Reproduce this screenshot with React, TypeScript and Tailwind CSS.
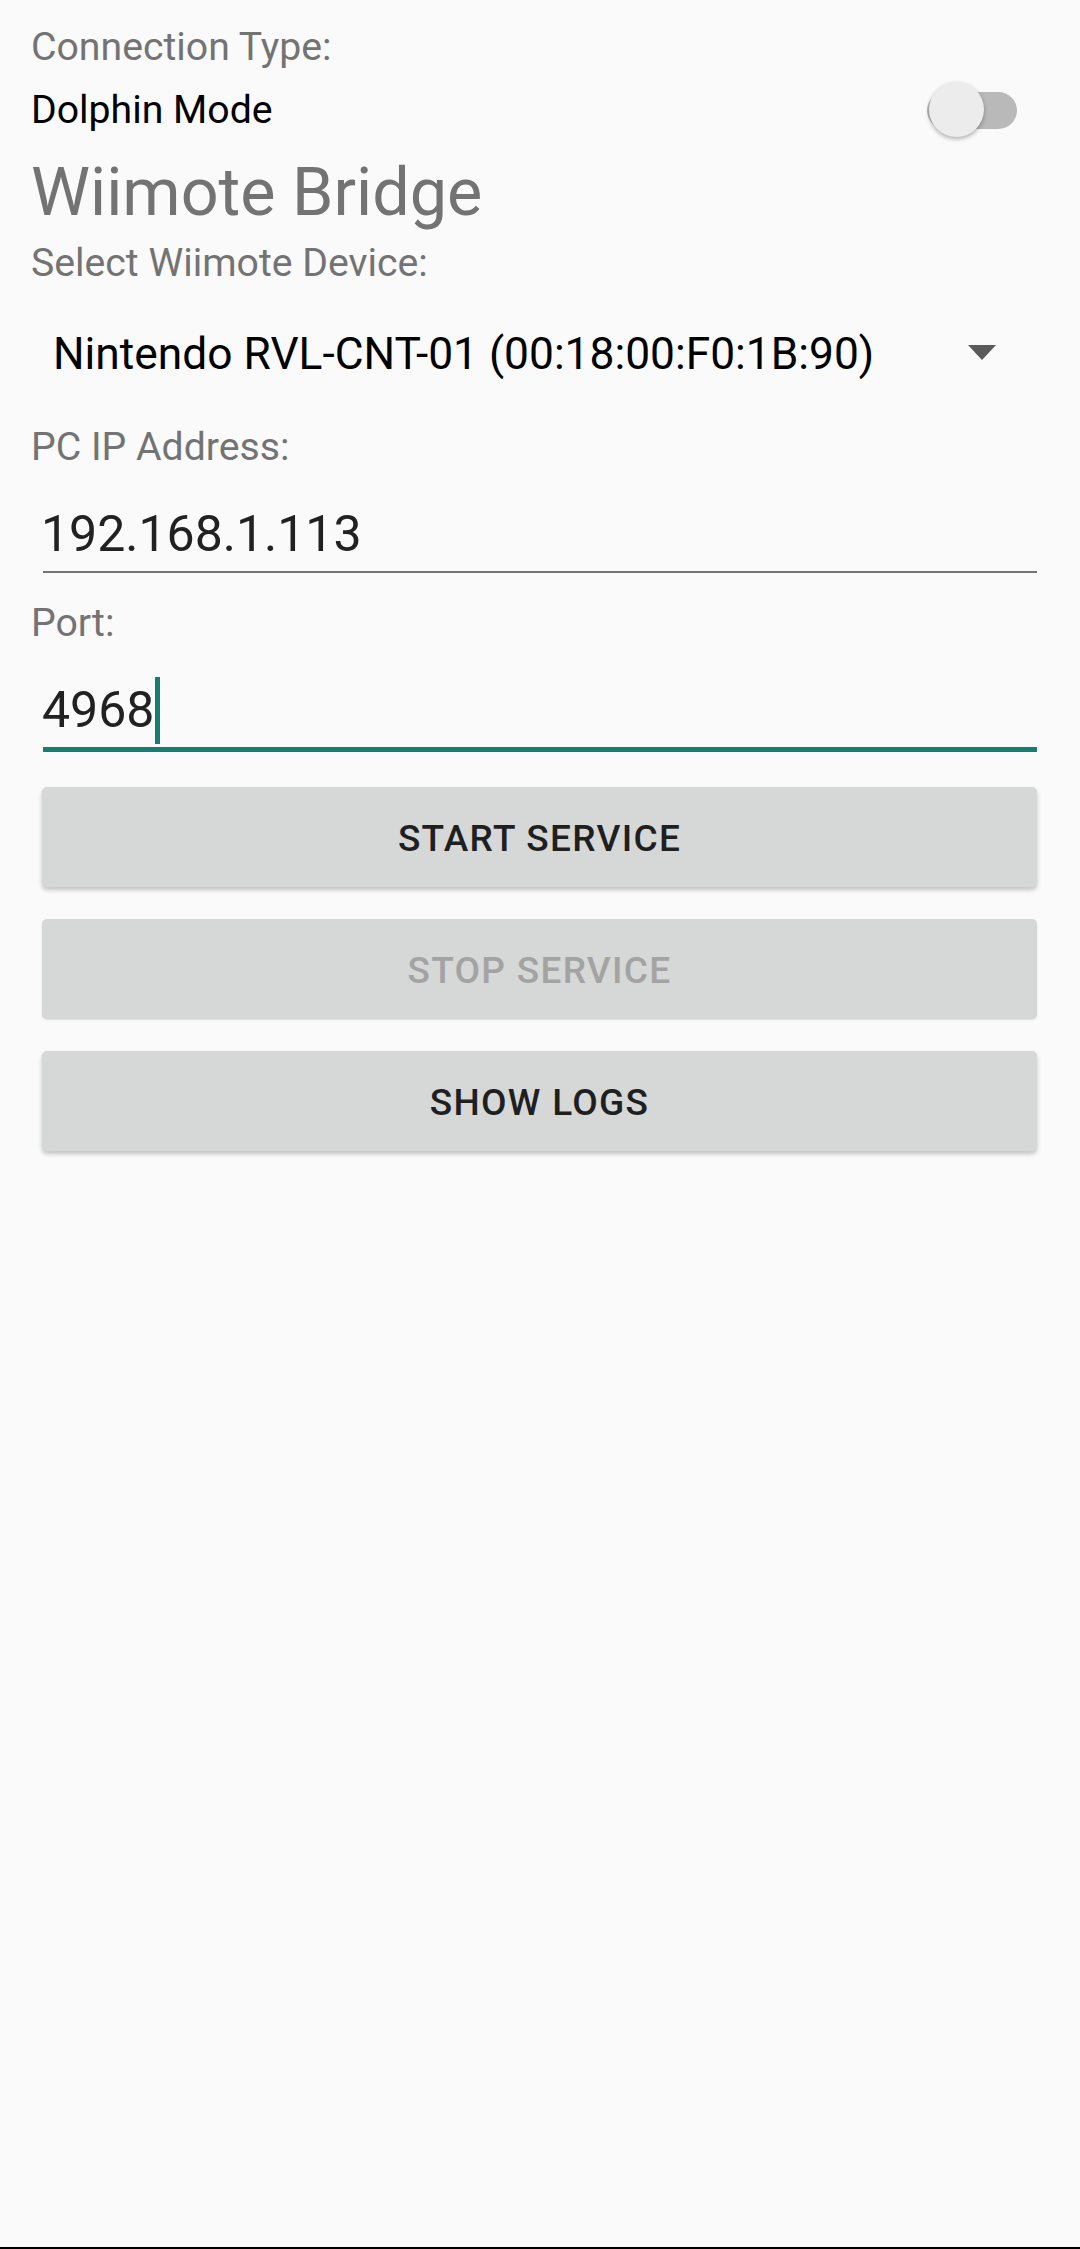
import React from 'react';

const font = { fontFamily: 'Roboto, "Noto Sans", sans-serif' };

const Label = ({ text, className = '' }: { text: string; className?: string }) => (
  <div className={`text-[39.2px] leading-[46px] text-[#737373] ${className}`}>{text}</div>
);

const Switch = () => (
  <div className="relative w-[90px] h-[56px] shrink-0">
    <div className="absolute left-0 right-0 top-[10px] h-[37px] rounded-full bg-[#b9b9b9]" />
    <div className="absolute left-[2px] top-0 w-[55px] h-[55px] rounded-full bg-[#ececec] shadow-[0_2px_4px_rgba(0,0,0,0.3)]" />
  </div>
);

const AppButton = ({ label, disabled = false }: { label: string; disabled?: boolean }) => (
  <button
    className={`h-[100px] w-full rounded-[5px] bg-[#d6d7d7] flex items-center justify-center pt-[3px] text-[37px] font-medium tracking-[0.035em] ${
      disabled ? 'text-[#a3a3a3] shadow-[0_1px_2px_rgba(0,0,0,0.12)]' : 'text-[#1f1f1f] shadow-[0_3px_4px_rgba(0,0,0,0.22)]'
    }`}
  >
    {label}
  </button>
);

export default function App() {
  return (
    <div className="h-[2249px] w-[1080px] bg-[#fafafa] flex flex-col" style={font}>
      <div className="flex flex-col pt-[24px] pl-[31px] pr-[43px]">
        <Label text="Connection Type:" />

        <div className="mt-[10px] h-[60px] flex items-center justify-between pr-[20px]">
          <span className="text-[39.2px] leading-[46px] text-black">Dolphin Mode</span>
          <Switch />
        </div>

        <div className="mt-[12px] text-[66.5px] leading-[80px] text-[#737373]">Wiimote Bridge</div>

        <Label text="Select Wiimote Device:" className="mt-[8px]" />

        <div className="mt-[20px] h-[96px] flex items-center justify-between pl-[22px] pr-[41px]">
          <span className="text-[44.3px] leading-[56px] text-black">Nintendo RVL-CNT-01 (00:18:00:F0:1B:90)</span>
          <svg width="28" height="15" viewBox="0 0 28 15" className="mt-[-4px]">
            <polygon points="0,0 28,0 14,15" fill="#5a5a5a" />
          </svg>
        </div>

        <Label text="PC IP Address:" className="mt-[22px]" />

        <div className="mt-[34px] flex flex-col">
          <div className="pl-[10px] text-[50px] leading-[60px] text-[#212121]">192.168.1.113</div>
          <div className="mt-[7px] ml-[12px] h-[2px] bg-[#757575]" />
        </div>

        <Label text="Port:" className="mt-[27px]" />

        <div className="mt-[34px] flex flex-col">
          <div className="pl-[11px] h-[60px] flex items-center text-[50px] leading-[60px] text-[#212121]">
            <span>4968</span>
            <span className="ml-[1px] w-[5px] h-[67px] bg-[#167d71]" />
          </div>
          <div className="mt-[7px] ml-[12px] h-[5px] bg-[#167d71]" />
        </div>

        <div className="mt-[35px] ml-[11px] flex flex-col gap-[32px]">
          <AppButton label="START SERVICE" />
          <AppButton label="STOP SERVICE" disabled />
          <AppButton label="SHOW LOGS" />
        </div>
      </div>

      <div className="flex-1" />
      <div className="h-[2px] bg-black" />
    </div>
  );
}
